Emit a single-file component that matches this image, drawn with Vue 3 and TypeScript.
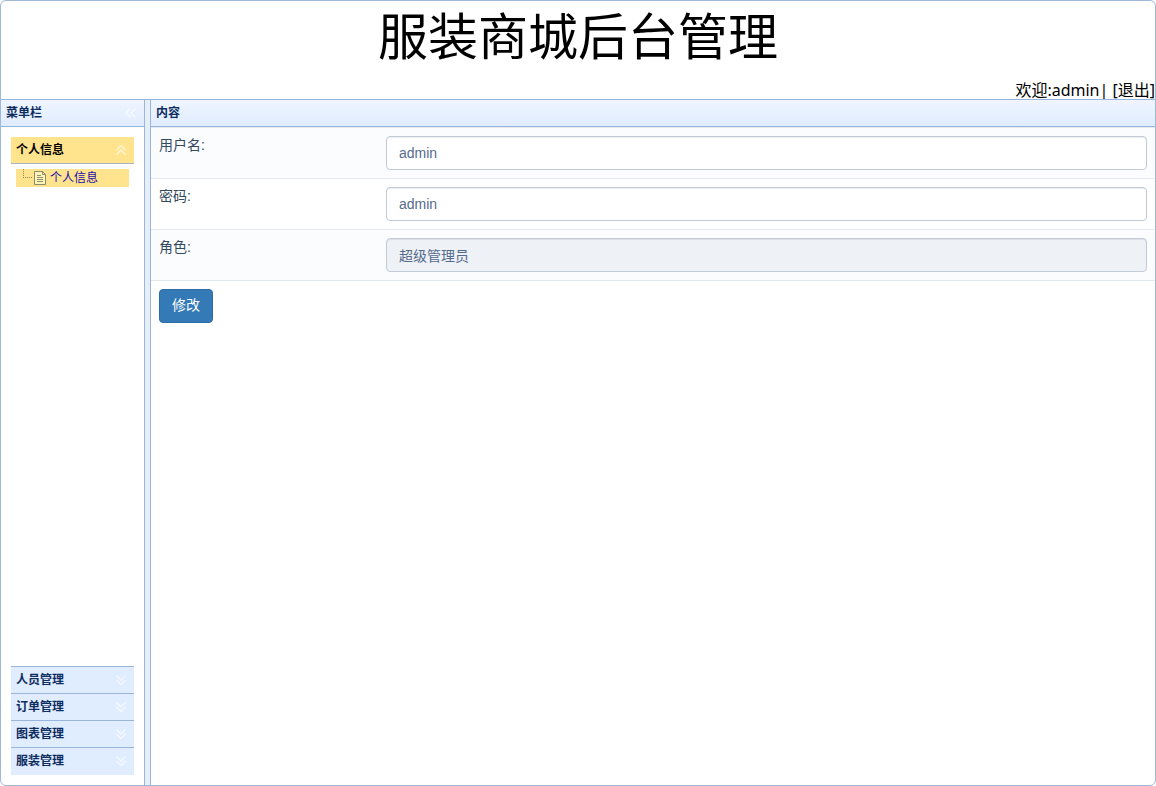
<script setup lang="ts">
import { ref } from 'vue'

const username = ref('admin')
const password = ref('admin')
const role = ref('超级管理员')
const closedGroups: string[] = ['人员管理', '订单管理', '图表管理', '服装管理']
</script>

<template>
  <div class="app-shell">
    <header class="banner">
      <h1>服装商城后台管理</h1>
      <div class="account">欢迎:admin| <a href="#logout">[退出]</a></div>
    </header>
    <div class="body">
      <aside class="west">
        <div class="panel-header">
          <h2>菜单栏</h2>
          <button class="tool" type="button" aria-label="收起菜单栏">
            <svg viewBox="0 0 16 16" width="16" height="16"><path d="M7.5 3.5L3 8l4.5 4.5M12.5 3.5L8 8l4.5 4.5" /></svg>
          </button>
        </div>
        <nav class="accordion">
          <button class="group open" type="button" aria-expanded="true">
            <span>个人信息</span>
            <svg viewBox="0 0 16 16" width="16" height="16"><path d="M3.5 8L8 3.5 12.5 8M3.5 12.5L8 8l4.5 4.5" /></svg>
          </button>
          <div class="tree">
            <a class="node" href="#profile">
              <svg class="branch" viewBox="0 0 18 18" width="18" height="18"><path d="M7.5 0v9M7 8.5h10" /></svg>
              <svg class="page" viewBox="0 0 16 18" width="16" height="18">
                <path class="sheet" d="M.5 2.5h8l3 3v10H.5z" />
                <path class="fold" d="M8.5 2.5v3h3" />
                <path class="lines" d="M3 6.5h4M3 8.5h6M3 10.5h6M3 12.5h6" />
              </svg>
              <span>个人信息</span>
            </a>
          </div>
          <button v-for="g in closedGroups" :key="g" class="group" type="button" aria-expanded="false">
            <span>{{ g }}</span>
            <svg viewBox="0 0 16 16" width="16" height="16"><path d="M3.5 3.5L8 8l4.5-4.5M3.5 8L8 12.5 12.5 8" /></svg>
          </button>
        </nav>
      </aside>
      <div class="splitter"></div>
      <main class="center">
        <div class="panel-header"><h2>内容</h2></div>
        <form @submit.prevent>
          <div class="row">
            <label for="username">用户名:</label>
            <input id="username" v-model="username" type="text" />
          </div>
          <div class="row">
            <label for="password">密码:</label>
            <input id="password" v-model="password" type="text" />
          </div>
          <div class="row">
            <label for="role">角色:</label>
            <input id="role" v-model="role" type="text" disabled />
          </div>
          <div class="actions"><button class="submit" type="submit">修改</button></div>
        </form>
      </main>
    </div>
  </div>
</template>

<style>
body {
  background: #fff;
}
</style>

<style scoped>
* {
  box-sizing: border-box;
}
.app-shell {
  display: flex;
  flex-direction: column;
  min-height: 100vh;
  border: 1px solid #9fb8d8;
  border-radius: 6px;
  overflow: hidden;
  font-family: "Liberation Sans", "Noto Sans CJK SC", sans-serif;
}
h1, h2 {
  margin: 0;
}
button {
  font-family: inherit;
  cursor: pointer;
}
.banner {
  display: flex;
  flex-direction: column;
  justify-content: space-between;
  height: 98px;
  color: #000;
}
h1 {
  font-size: 50px;
  line-height: 75px;
  font-weight: 400;
  text-align: center;
}
.account {
  font-family: "Noto Sans", "Noto Sans CJK SC", sans-serif;
  font-size: 16px;
  line-height: 18px;
  text-align: right;
}
.account a {
  color: #000;
  text-decoration: none;
}
.body {
  display: flex;
  flex: 1;
  border-top: 1px solid #9ab5da;
}
.west {
  display: flex;
  flex-direction: column;
  width: 144px;
  border-right: 1px solid #9ab5da;
}
.splitter {
  width: 5px;
  background: #e6eef8;
}
.center {
  flex: 1;
  min-width: 0;
  border-left: 1px solid #9ab5da;
}
.panel-header {
  display: flex;
  align-items: center;
  justify-content: space-between;
  height: 27px;
  padding: 0 5px;
  border-bottom: 1px solid #9ab5da;
  background: linear-gradient(#eff5ff, #e0ecff);
}
h2 {
  color: #0e2d5f;
  font-size: 12px;
  line-height: 16px;
  font-weight: 700;
}
.tool {
  display: flex;
  padding: 0;
  border: 0;
  background: none;
}
.tool path, .group path {
  fill: none;
  stroke: #fff;
  stroke-width: 1.5;
  opacity: 0.65;
}
.accordion {
  display: flex;
  flex-direction: column;
  flex: 1;
  padding: 10px;
}
.group {
  display: flex;
  align-items: center;
  justify-content: space-between;
  height: 27px;
  padding: 0 5px;
  border: 0;
  border-top: 1px solid #9ab5da;
  background: #e0ecff;
  color: #0e2d5f;
  font-size: 12px;
  line-height: 16px;
  font-weight: 700;
}
.group:last-child {
  height: 28px;
  padding-bottom: 1px;
}
.group.open {
  border-top: 0;
  border-bottom: 1px solid #a9b4c0;
  background: #ffe48d;
  color: #000;
}
.tree {
  flex: 1;
  padding: 5px;
}
.node {
  display: flex;
  align-items: center;
  height: 18px;
  background: #ffe48d;
  color: #1a0dab;
  font-size: 12px;
  line-height: 18px;
  text-decoration: none;
}
.branch path {
  fill: none;
  stroke: #8c8463;
  stroke-dasharray: 1 1;
}
.page path {
  fill: none;
  stroke: #8b8a6c;
}
.page .sheet {
  fill: #fff3b8;
}
.page .lines {
  stroke: #8d9270;
}
form {
  color: #34495e;
  font-size: 14px;
  line-height: 20px;
}
.row {
  display: grid;
  grid-template-columns: 227px 1fr;
  border-bottom: 1px solid #e4e9ef;
}
.row:first-child {
  border-top: 1px solid #e4e9ef;
}
.row:nth-child(odd) {
  background: #fafcfe;
}
label {
  padding: 7px 8px;
}
input {
  min-width: 0;
  height: 34px;
  margin: 8px;
  padding: 6px 12px;
  border: 1px solid #c2cad8;
  border-radius: 4px;
  background: #fff;
  box-shadow: inset 0 1px 1px rgba(0, 0, 0, 0.075);
  color: #556b8d;
  font-family: inherit;
  font-size: 14px;
}
input:disabled {
  background: #eef1f5;
}
.actions {
  padding: 8px;
}
.submit {
  height: 34px;
  padding: 0 12px 2px;
  border: 1px solid #2e6da4;
  border-radius: 4px;
  background: #337ab7;
  color: #fff;
  font-size: 14px;
  line-height: 20px;
}
</style>
